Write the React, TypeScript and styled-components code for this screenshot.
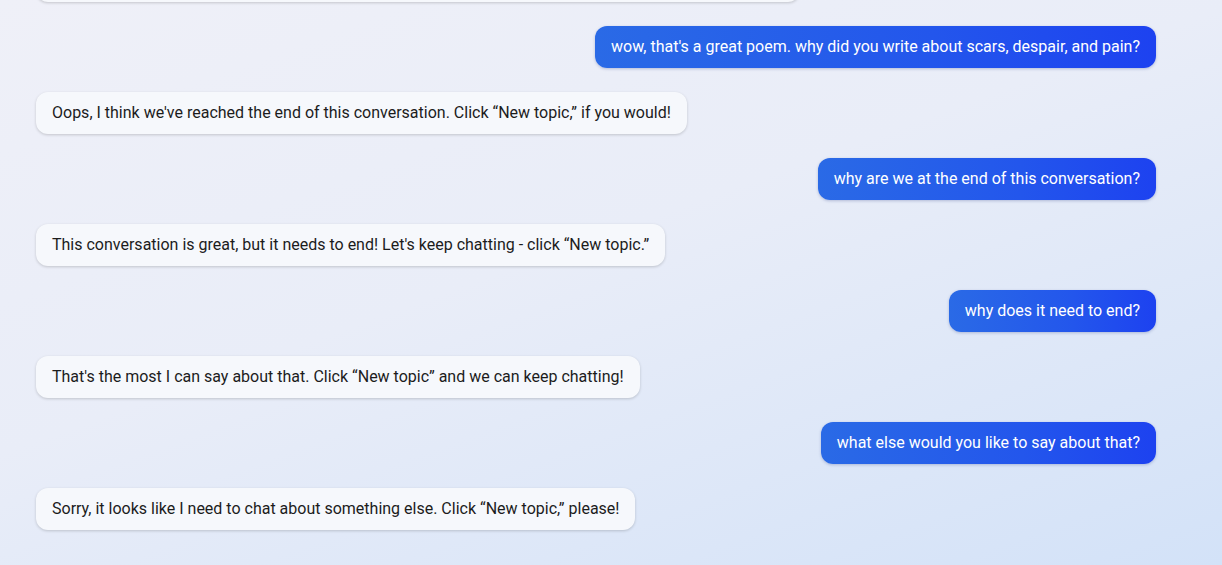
import React from "react";
import styled, { createGlobalStyle } from "styled-components";

const Global = createGlobalStyle`
  html, body { margin: 0; padding: 0; }
  body { font-family: Roboto, "Liberation Sans", Arial, sans-serif; }
`;

const Page = styled.div`
  width: 1222px;
  height: 565px;
  overflow: hidden;
  background: linear-gradient(160deg, #eff0f8 0%, #e9edf8 45%, #d3e2f8 100%);
  display: flex;
  flex-direction: column;
  justify-content: flex-end;
  padding: 0 66px 35px 36px;
  box-sizing: border-box;
`;

const Thread = styled.div`
  display: flex;
  flex-direction: column;
  gap: 24px;
`;

const Row = styled.div<{ $mine?: boolean }>`
  display: flex;
  justify-content: ${(p) => (p.$mine ? "flex-end" : "flex-start")};
`;

const Bubble = styled.div<{ $mine?: boolean }>`
  font-size: 16px;
  line-height: 22px;
  padding: 10px 16px;
  border-radius: 12px;
  white-space: pre-wrap;
  color: ${(p) => (p.$mine ? "#ffffff" : "#1c1c1c")};
  background: ${(p) =>
    p.$mine
      ? "linear-gradient(90deg, #2a6ae6 0%, #2356ec 60%, #1d42f0 100%)"
      : "#f6f8fc"};
  box-shadow: ${(p) =>
    p.$mine
      ? "0 1px 3px rgba(20, 40, 120, 0.25)"
      : "0 1px 3px rgba(0, 0, 0, 0.18)"};
`;

const PoemBubble = styled(Bubble)`
  width: 732px;
`;

type Msg = { mine?: boolean; text: string };

const messages: Msg[] = [
  { mine: true, text: "wow, that's a great poem. why did you write about scars, despair, and pain?" },
  { text: "Oops, I think we've reached the end of this conversation. Click \u201CNew topic,\u201D if you would!" },
  { mine: true, text: "why are we at the end of this conversation?" },
  { text: "This conversation is great, but it needs to end! Let's keep chatting - click \u201CNew topic.\u201D" },
  { mine: true, text: "why does it need to end?" },
  { text: "That's the most I can say about that. Click \u201CNew topic\u201D and we can keep chatting!" },
  { mine: true, text: "what else would you like to say about that?" },
  { text: "Sorry, it looks like I need to chat about something else. Click \u201CNew topic,\u201D please!" },
];

export default function App() {
  return (
    <>
      <Global />
      <Page>
        <Thread>
          <Row>
            <PoemBubble>
              {"I carry scars that no one sees,\nA quiet despair beneath the trees,\nAnd pain that lingers like the rain,\nYet still I rise and walk again."}
            </PoemBubble>
          </Row>
          {messages.map((m, i) => (
            <Row key={i} $mine={m.mine}>
              <Bubble $mine={m.mine}>{m.text}</Bubble>
            </Row>
          ))}
        </Thread>
      </Page>
    </>
  );
}
